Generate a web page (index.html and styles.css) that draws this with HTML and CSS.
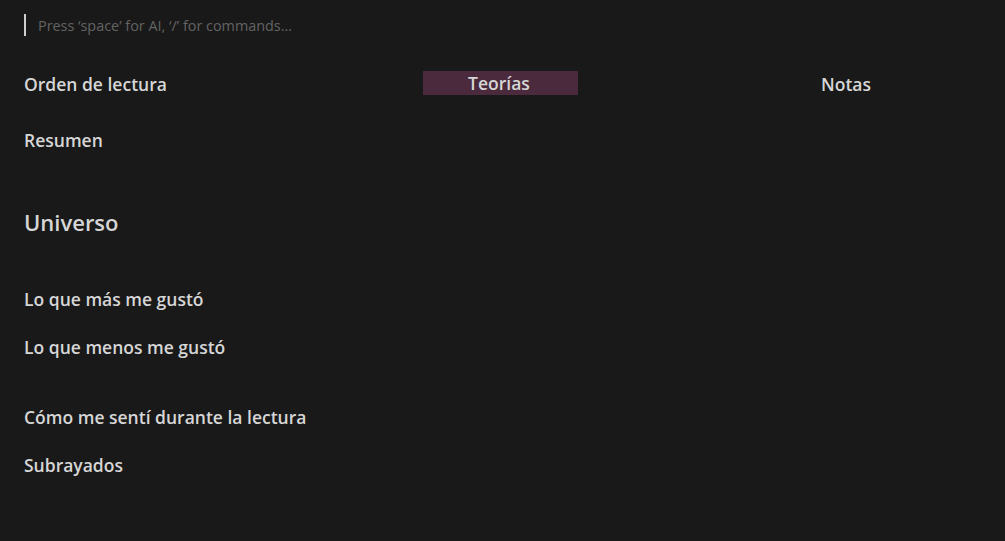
FILE: index.html
```html
<!DOCTYPE html>
<html lang="es">
<head>
<meta charset="utf-8">
<link rel="stylesheet" href="styles.css">
</head>
<body>
<main class="page">
  <div class="prompt">
    <span class="caret"></span>
    <span class="placeholder">Press ‘space’ for AI, ‘/’ for commands…</span>
  </div>
  <div class="cols">
    <div class="col col-1">Orden de lectura</div>
    <div class="col col-2">Teorías</div>
    <div class="col col-3">Notas</div>
  </div>
  <div class="h3 resumen">Resumen</div>
  <div class="h2 universo">Universo</div>
  <div class="h3 mas">Lo que más me gustó</div>
  <div class="h3 menos">Lo que menos me gustó</div>
  <div class="h3 como">Cómo me sentí durante la lectura</div>
  <div class="h3 sub">Subrayados</div>
</main>
</body>
</html>
```
FILE: styles.css
```css
html, body {
  margin: 0;
  padding: 0;
  background: #191919;
  height: 100%;
}
body {
  font-family: "Open Sans", "Noto Sans", sans-serif;
  color: #d6d6d6;
}
.page {
  padding: 14px 24px 0 24px;
  display: flex;
  flex-direction: column;
}
.prompt {
  display: flex;
  align-items: center;
  height: 22px;
}
.caret {
  width: 2px;
  height: 22px;
  background: #cfcfcf;
}
.placeholder {
  margin-left: 12px;
  padding-top: 1px;
  font-size: 14.4px;
  color: #636363;
}
.cols {
  display: grid;
  grid-template-columns: 399px 155px 1fr;
  margin-top: 35px;
  align-items: start;
}
.col {
  font-size: 17.5px;
  font-weight: 600;
  line-height: 24px;
  padding-top: 1px;
}
.col-2 {
  background: #4a2a3c;
  text-align: center;
  padding-right: 3px;
  line-height: 23px;
}
.col-3 {
  padding-left: 243px;
}
.h3 {
  font-size: 17.5px;
  font-weight: 600;
  line-height: 24px;
}
.h2 {
  font-size: 22px;
  font-weight: 600;
  line-height: 30px;
}
.resumen { margin-top: 32px; }
.universo { margin-top: 55px; }
.mas { margin-top: 50px; }
.menos { margin-top: 24px; }
.como { margin-top: 46px; }
.sub { margin-top: 24px; }
```
